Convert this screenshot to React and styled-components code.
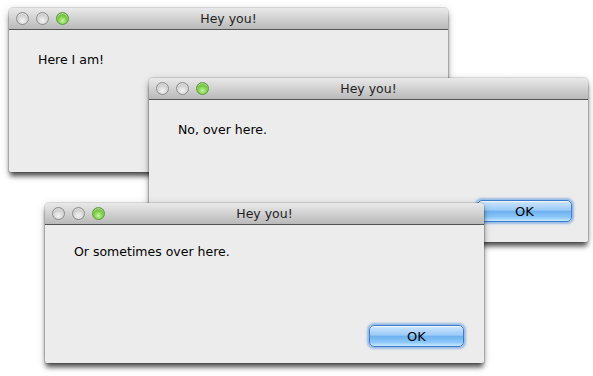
import React from "react";
import styled, { createGlobalStyle } from "styled-components";

const GlobalStyle = createGlobalStyle`
  html, body {
    margin: 0;
    padding: 0;
    background: #ffffff;
  }
  body {
    font-family: "DejaVu Sans", "Liberation Sans", sans-serif;
  }
`;

const Desktop = styled.main`
  position: relative;
  width: 593px;
  height: 376px;
  overflow: hidden;
  background: #ffffff;
`;

const Window = styled.section`
  position: absolute;
  left: ${(p) => p.$x}px;
  top: ${(p) => p.$y}px;
  width: ${(p) => p.$w}px;
  height: ${(p) => p.$h}px;
  display: flex;
  flex-direction: column;
  background: #ececec;
  border-radius: 4px 4px 2px 2px;
  box-shadow: 0 0 0 1px rgba(0, 0, 0, 0.12), 0 5px 5px -1px rgba(0, 0, 0, 0.65),
    0 2px 10px rgba(0, 0, 0, 0.18);
`;

const TitleBar = styled.header`
  position: relative;
  height: 21px;
  flex: none;
  display: flex;
  align-items: center;
  justify-content: center;
  border-radius: 4px 4px 0 0;
  background: linear-gradient(#e9e9e9 0%, #d4d4d4 45%, #b9b9b9 100%);
  border-bottom: 1px solid #545454;
  font-size: 12.5px;
  color: #1e1e1e;
`;

const Lights = styled.div`
  position: absolute;
  left: 7px;
  top: 4px;
  display: flex;
  gap: 7px;
`;

const Light = styled.span`
  width: 13px;
  height: 13px;
  box-sizing: border-box;
  border-radius: 50%;
  border: 1px solid ${(p) => (p.$green ? "#5a9a3a" : "#8c8c8c")};
  background: ${(p) =>
    p.$green
      ? "radial-gradient(circle at 50% 70%, #c8f5a0 0%, #7fd04a 45%, #4f9a2a 100%)"
      : "radial-gradient(circle at 50% 70%, #f4f4f4 0%, #d6d6d6 50%, #a9a9a9 100%)"};
  box-shadow: inset 0 1px 1px rgba(255, 255, 255, 0.6);
`;

const Body = styled.div`
  flex: 1;
  padding: ${(p) => p.$top}px 29px 0;
  font-size: 12.5px;
  color: #000;
`;

const Footer = styled.div`
  display: flex;
  justify-content: flex-end;
  padding: 0 ${(p) => p.$right}px ${(p) => p.$bottom}px 0;
`;

const Button = styled.button`
  width: 95px;
  height: 22px;
  padding: 0;
  border: 1px solid #3c7bc8;
  border-radius: 5px;
  font-family: "DejaVu Sans", "Liberation Sans", sans-serif;
  font-size: 13px;
  color: #000;
  background: linear-gradient(
    #cfe6fc 0%,
    #9ccbf7 45%,
    #6eb1f0 52%,
    #8ac6f8 80%,
    #c6e8ff 100%
  );
  box-shadow: 0 0 2px 2px rgba(70, 140, 220, 0.5),
    inset 0 1px 1px rgba(255, 255, 255, 0.7);
`;

const windows = [
  { x: 9, y: 8, h: 164, text: "Here I am!", top: 22, button: false },
  { x: 149, y: 78, h: 164, text: "No, over here.", top: 22, button: true, right: 16, bottom: 20 },
  { x: 45, y: 203, h: 160, text: "Or sometimes over here.", top: 19, button: true, right: 20, bottom: 16 },
];

function MacWindow({ w }) {
  return (
    <Window $x={w.x} $y={w.y} $w={439} $h={w.h}>
      <TitleBar>
        <Lights>
          <Light />
          <Light />
          <Light $green />
        </Lights>
        Hey you!
      </TitleBar>
      <Body $top={w.top}>{w.text}</Body>
      {w.button && (
        <Footer $right={w.right} $bottom={w.bottom}>
          <Button>OK</Button>
        </Footer>
      )}
    </Window>
  );
}

export default function App() {
  return (
    <Desktop>
      <GlobalStyle />
      {windows.map((w) => (
        <MacWindow key={w.text} w={w} />
      ))}
    </Desktop>
  );
}
